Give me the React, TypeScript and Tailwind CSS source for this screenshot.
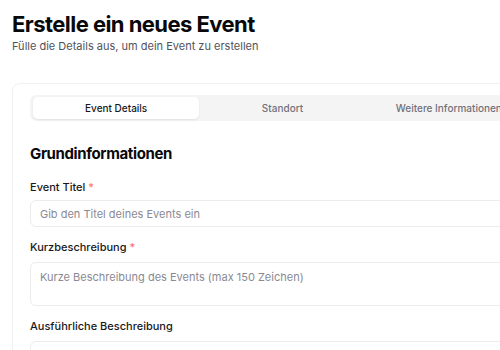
import { useState } from 'react';

const tabs = ['Event Details', 'Standort', 'Weitere Informationen'];

function Label({ children, required }: { children: string; required?: boolean }) {
  return (
    <label className="block text-[11px] font-medium leading-4 text-[#18181b]">
      {children}
      {required ? <span className="ml-[3px] text-[#f87171]">*</span> : null}
    </label>
  );
}

export default function App() {
  const [active, setActive] = useState(0);

  return (
    <div className="h-[350px] w-[500px] overflow-hidden bg-white font-['Inter',sans-serif] text-[#18181b]">
      <div className="w-[565px] px-3 pt-[11px]">
        <h1 className="text-[22px] font-bold leading-[26px] tracking-tight text-[#09090b]">
          Erstelle ein neues Event
        </h1>
        <p className="mt-[1px] text-[11px] leading-4 text-[#52525b]">
          Fülle die Details aus, um dein Event zu erstellen
        </p>

        <div className="mt-[29px] rounded-lg border border-[#f1f1f3] bg-white px-[17px] pt-[11px] shadow-[0_1px_2px_rgba(0,0,0,0.03)]">
          <div className="grid h-[26px] grid-cols-3 items-center rounded-md bg-[#f4f4f5] px-[3px]">
            {tabs.map((tab, i) => (
              <button
                key={tab}
                type="button"
                onClick={() => setActive(i)}
                className={
                  i === active
                    ? 'h-[22px] rounded-[5px] bg-white text-[10px] font-medium text-[#18181b] shadow-[0_1px_2px_rgba(0,0,0,0.08)]'
                    : 'h-[22px] rounded-[5px] text-[10px] font-medium text-[#71717a]'
                }
              >
                {tab}
              </button>
            ))}
          </div>

          <h2 className="mt-[23px] text-[15px] font-bold leading-5 tracking-tight text-[#09090b]">
            Grundinformationen
          </h2>

          <div className="mt-[15px] flex flex-col">
            <Label required>Event Titel</Label>
            <input
              className="mt-[5px] h-[27px] rounded-md border border-[#ececef] px-[9px] text-[11px] outline-none placeholder:text-[#8a8a93]"
              placeholder="Gib den Titel deines Events ein"
            />
          </div>

          <div className="mt-[12px] flex flex-col">
            <Label required>Kurzbeschreibung</Label>
            <textarea
              className="mt-[7px] h-[44px] resize-none rounded-md border border-[#ececef] px-[9px] py-[6px] text-[11px] leading-4 outline-none placeholder:text-[#8a8a93]"
              placeholder="Kurze Beschreibung des Events (max 150 Zeichen)"
            />
          </div>

          <div className="mt-[12px] flex flex-col">
            <Label>Ausführliche Beschreibung</Label>
            <textarea
              className="mt-[7px] h-[90px] resize-none rounded-md border border-[#ececef] px-[9px] py-[6px] text-[11px] leading-4 outline-none placeholder:text-[#8a8a93]"
            />
          </div>
        </div>
      </div>
    </div>
  );
}
